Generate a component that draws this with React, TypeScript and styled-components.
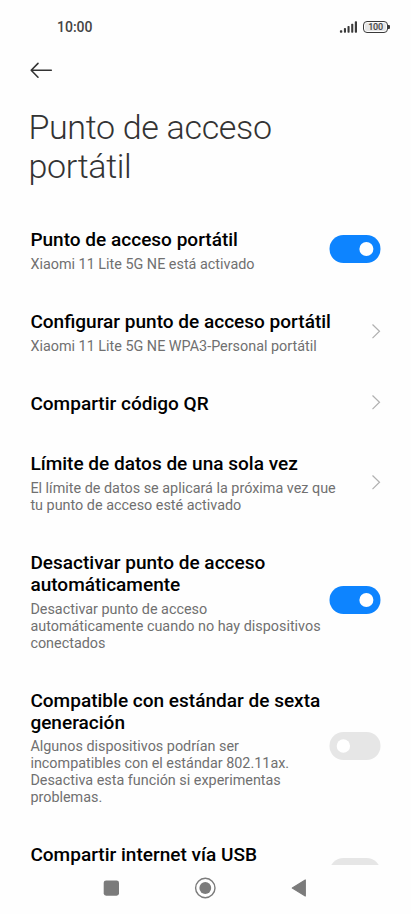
import React from "react";
import styled, { createGlobalStyle } from "styled-components";

const Global = createGlobalStyle`
  * { box-sizing: border-box; }
  body { margin: 0; background: #fefefe; font-family: Roboto, sans-serif; }
`;
const Screen = styled.div`
  width: 411px;
  height: 914px;
  display: flex;
  flex-direction: column;
  overflow: hidden;
  background: #fefefe;
`;
const StatusBar = styled.header`
  height: 54px;
  flex: none;
  display: flex;
  justify-content: space-between;
  align-items: center;
  padding: 0 21px 0 57px;
  font-size: 14px;
  font-weight: 500;
  color: #444;
`;
const StatusIcons = styled.div`
  display: flex;
  align-items: center;
  gap: 5px;
`;
const Battery = styled.div`
  display: flex;
  align-items: center;
`;
const BatteryBody = styled.div`
  width: 25px;
  height: 12px;
  padding: 1px;
  border: 1px solid #3a3a3a;
  border-radius: 4px;
`;
const BatteryLevel = styled.div`
  display: flex;
  align-items: center;
  justify-content: center;
  height: 8px;
  border-radius: 2px;
  background: #e6e6e6;
  color: #444;
  font-size: 9px;
  line-height: 8px;
  font-weight: 500;
  letter-spacing: -0.2px;
`;
const BatteryTip = styled.div`
  width: 2px;
  height: 4px;
  border-radius: 0 1px 1px 0;
  background: #3a3a3a;
`;
const BackButton = styled.button`
  flex: none;
  display: flex;
  width: 24px;
  height: 18px;
  margin: 7px 0 0 30px;
  padding: 0;
  border: 0;
  background: none;
`;
const Title = styled.h1`
  flex: none;
  width: 300px;
  margin: 29px 0 0 28.4px;
  font-size: 34px;
  line-height: 39px;
  font-weight: 300;
  letter-spacing: -0.32px;
  color: #333;
`;
const List = styled.main`
  flex: 1;
  min-height: 0;
  overflow: hidden;
  padding: 43px 30px 0 30.4px;
`;
const Row = styled.section<{ $gap: number; $minHeight?: number }>`
  display: flex;
  align-items: center;
  justify-content: space-between;
  min-height: ${p => p.$minHeight ?? 0}px;
  margin-bottom: ${p => p.$gap}px;
`;
const Copy = styled.div<{ $width: number }>`
  flex: none;
  align-self: flex-start;
  width: ${p => p.$width}px;
  margin-bottom: -3px;
`;
const Label = styled.h2`
  margin: 0;
  font-size: 19.05px;
  line-height: 22px;
  font-weight: 500;
  color: #000;
`;
const Note = styled.p`
  margin: 4.6px 0 0;
  font-size: 14.39px;
  line-height: 17px;
  color: #707070;
`;
const Toggle = styled.svg`
  flex: none;
  display: block;
`;
const NavBar = styled.nav`
  flex: none;
  height: 49px;
`;

type Item = {
  label: string;
  note?: string;
  on?: boolean;
  width: number;
  gap: number;
  minHeight?: number;
};

const items: Item[] = [
  { label: "Punto de acceso portátil", note: "Xiaomi 11 Lite 5G NE está activado", on: true, width: 292, gap: 41.4 },
  { label: "Configurar punto de acceso portátil", note: "Xiaomi 11 Lite 5G NE WPA3-Personal portátil", width: 320, gap: 41.4 },
  { label: "Compartir código QR", width: 320, gap: 41.4, minHeight: 19 },
  { label: "Límite de datos de una sola vez", note: "El límite de datos se aplicará la próxima vez que tu punto de acceso esté activado", width: 320, gap: 41.1 },
  { label: "Desactivar punto de acceso automáticamente", note: "Desactivar punto de acceso automáticamente cuando no hay dispositivos conectados", on: true, width: 292, gap: 40.9 },
  { label: "Compatible con estándar de sexta generación", note: "Algunos dispositivos podrían ser incompatibles con el estándar 802.11ax. Desactiva esta función si experimentas problemas.", on: false, width: 292, gap: 40.8 },
  { label: "Compartir internet vía USB", on: false, width: 292, gap: 0, minHeight: 57 },
];

const Signal = () => (
  <svg width="19" height="12" viewBox="0 0 19 12" fill="#3a3a3a">
    <rect x="0.9" y="9.3" width="2.4" height="2.4" rx="0.7" />
    <rect x="4.9" y="7" width="2.1" height="4.7" rx="0.7" />
    <rect x="8.5" y="5" width="2.1" height="6.7" rx="0.7" />
    <rect x="12.2" y="2.7" width="2.1" height="9" rx="0.7" />
    <rect x="15.8" y="0.3" width="2.2" height="11.4" rx="0.7" />
  </svg>
);

const Chevron = () => (
  <svg width="9" height="16" viewBox="0 0 9 16" fill="none" stroke="#b0b0b0" strokeWidth="1.2">
    <path d="M0.5 1.5 7.5 8.3 0.5 15.1" />
  </svg>
);

const Switch = ({ on }: { on: boolean }) => (
  <Toggle width="52" height="28" viewBox="0 0 52 28" role="switch" aria-checked={on}>
    <rect x="0.5" width="51" height="28" rx="14" fill={on ? "#0d84ff" : "#e6e6e6"} />
    <circle cx={on ? 37.4 : 14.4} cy="14" r={on ? 7 : 6.7} fill="#fff" />
  </Toggle>
);

export default function App() {
  return (
    <Screen>
      <Global />
      <StatusBar>
        <span>10:00</span>
        <StatusIcons>
          <Signal />
          <Battery>
            <BatteryBody><BatteryLevel>100</BatteryLevel></BatteryBody>
            <BatteryTip />
          </Battery>
        </StatusIcons>
      </StatusBar>
      <BackButton aria-label="Atrás">
        <svg width="24" height="18" viewBox="0 0 24 18" fill="none" stroke="#333" strokeWidth="1.6" strokeLinecap="round" strokeLinejoin="round">
          <path d="M1.2 9.3H21.3M8 2.4 1.2 9.3 8 16.2" />
        </svg>
      </BackButton>
      <Title>Punto de acceso portátil</Title>
      <List>
        {items.map(item => (
          <Row key={item.label} $gap={item.gap} $minHeight={item.minHeight}>
            <Copy $width={item.width}>
              <Label>{item.label}</Label>
              {item.note && <Note>{item.note}</Note>}
            </Copy>
            {item.on === undefined ? <Chevron /> : <Switch on={item.on} />}
          </Row>
        ))}
      </List>
      <NavBar>
        <svg width="411" height="49" viewBox="0 0 411 49" fill="#7b7b7b">
          <rect x="103.7" y="15.4" width="15.3" height="15.3" rx="2.4" />
          <circle cx="205.3" cy="23" r="9.7" fill="none" stroke="#7b7b7b" strokeWidth="1.4" />
          <circle cx="205.3" cy="23" r="5.9" />
          <path d="M292.3 23 305.3 15V31Z" stroke="#7b7b7b" strokeWidth="1.2" strokeLinejoin="round" />
        </svg>
      </NavBar>
    </Screen>
  );
}
